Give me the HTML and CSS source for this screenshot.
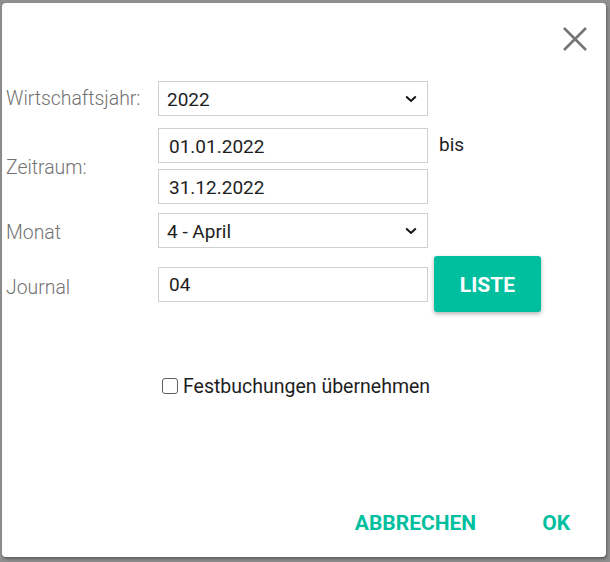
FILE: index.html
```html
<!DOCTYPE html>
<html lang="de">
<head>
<meta charset="utf-8">
<title>Dialog</title>
<link rel="stylesheet" href="styles.css">
</head>
<body>
<div class="dialog">
  <div class="header">
    <button class="close" aria-label="Schließen">
      <svg width="24" height="24" viewBox="0 0 24 24"><path d="M1 1 L23 23 M23 1 L1 23" stroke="#767676" stroke-width="2.6" fill="none"/></svg>
    </button>
  </div>
  <div class="form">
    <div class="row r1">
      <div class="label">Wirtschaftsjahr:</div>
      <div class="field select"><span>2022</span>
        <svg class="chev" width="12" height="8" viewBox="0 0 12 8"><path d="M1.2 1.5 L6 6 L10.8 1.5" stroke="#111" stroke-width="2" fill="none"/></svg>
      </div>
    </div>
    <div class="row r2">
      <div class="label">Zeitraum:</div>
      <div class="stack">
        <div class="pair">
          <div class="field"><span>01.01.2022</span></div>
          <span class="bis">bis</span>
        </div>
        <div class="field"><span>31.12.2022</span></div>
      </div>
    </div>
    <div class="row r3">
      <div class="label">Monat</div>
      <div class="field select"><span>4 - April</span>
        <svg class="chev" width="12" height="8" viewBox="0 0 12 8"><path d="M1.2 1.5 L6 6 L10.8 1.5" stroke="#111" stroke-width="2" fill="none"/></svg>
      </div>
    </div>
    <div class="row r4">
      <div class="label">Journal</div>
      <div class="field"><span>04</span></div>
      <button class="liste">LISTE</button>
    </div>
    <label class="check">
      <span class="box"></span>
      <span>Festbuchungen übernehmen</span>
    </label>
  </div>
  <div class="footer">
    <button class="text-btn">ABBRECHEN</button>
    <button class="text-btn">OK</button>
  </div>
</div>
</body>
</html>
```
FILE: styles.css
```css
html, body {
  margin: 0;
  padding: 0;
}
body {
  width: 610px;
  height: 562px;
  background: #8f8f8f;
  font-family: Roboto, "Liberation Sans", sans-serif;
  overflow: hidden;
}
.dialog {
  box-sizing: border-box;
  margin: 3px 0 0 2px;
  width: 604px;
  height: 554px;
  background: #fff;
  border-radius: 4px;
  box-shadow: 1px 2px 3px rgba(0,0,0,0.35);
  display: flex;
  flex-direction: column;
}
.header {
  height: 78px;
  display: flex;
  justify-content: flex-end;
}
.close {
  margin: 24px 19px 0 0;
  width: 24px;
  height: 24px;
  padding: 0;
  border: 0;
  background: none;
  display: flex;
}
.form {
  padding-left: 4px;
  display: flex;
  flex-direction: column;
}
.row {
  display: flex;
  align-items: center;
}
.label {
  width: 152px;
  flex: none;
  font-weight: 300;
  font-size: 19.4px;
  color: #727272;
}
.field {
  box-sizing: border-box;
  width: 270px;
  height: 35px;
  border: 1px solid #cfcfcf;
  display: flex;
  align-items: center;
  padding: 1px 10px 0 10px;
  font-size: 19px;
  color: #1e1e1e;
}
.select {
  padding-left: 8px;
  justify-content: space-between;
}
.r2 {
  margin-top: 12px;
}
.r2 .label {
  padding-top: 2px;
}
.stack {
  display: flex;
  flex-direction: column;
  gap: 6px;
}
.pair {
  display: flex;
  align-items: center;
}
.bis {
  margin-left: 11px;
  font-size: 19px;
  color: #1e1e1e;
  padding-bottom: 2px;
}
.r3 {
  margin-top: 9px;
}
.r3 .label {
  padding-top: 4px;
}
.r4 {
  margin-top: 8px;
}
.r4 .label {
  padding-top: 6px;
}
.liste {
  margin-left: 6px;
  width: 107px;
  height: 56px;
  border: 0;
  border-radius: 3px;
  background: #00bf9f;
  color: #fff;
  font-family: Roboto, "Liberation Sans", sans-serif;
  font-weight: 700;
  font-size: 21px;
  padding: 2px 0 0 0;
  box-shadow: 0 2px 4px rgba(0,0,0,0.3);
}
.check {
  margin: 63px 0 0 156px;
  display: flex;
  align-items: center;
  gap: 5px;
  font-size: 19.5px;
  color: #1e1e1e;
}
.box {
  box-sizing: border-box;
  width: 16px;
  height: 16px;
  border: 1px solid #5f5f5f;
  border-radius: 3px;
  margin-top: -2px;
}
.footer {
  margin-top: auto;
  display: flex;
  justify-content: flex-end;
  gap: 66px;
  padding: 0 36px 22px 0;
}
.text-btn {
  border: 0;
  background: none;
  padding: 0;
  font-family: Roboto, "Liberation Sans", sans-serif;
  font-weight: 700;
  font-size: 21px;
  color: #00bf9f;
  line-height: 24px;
}
```
